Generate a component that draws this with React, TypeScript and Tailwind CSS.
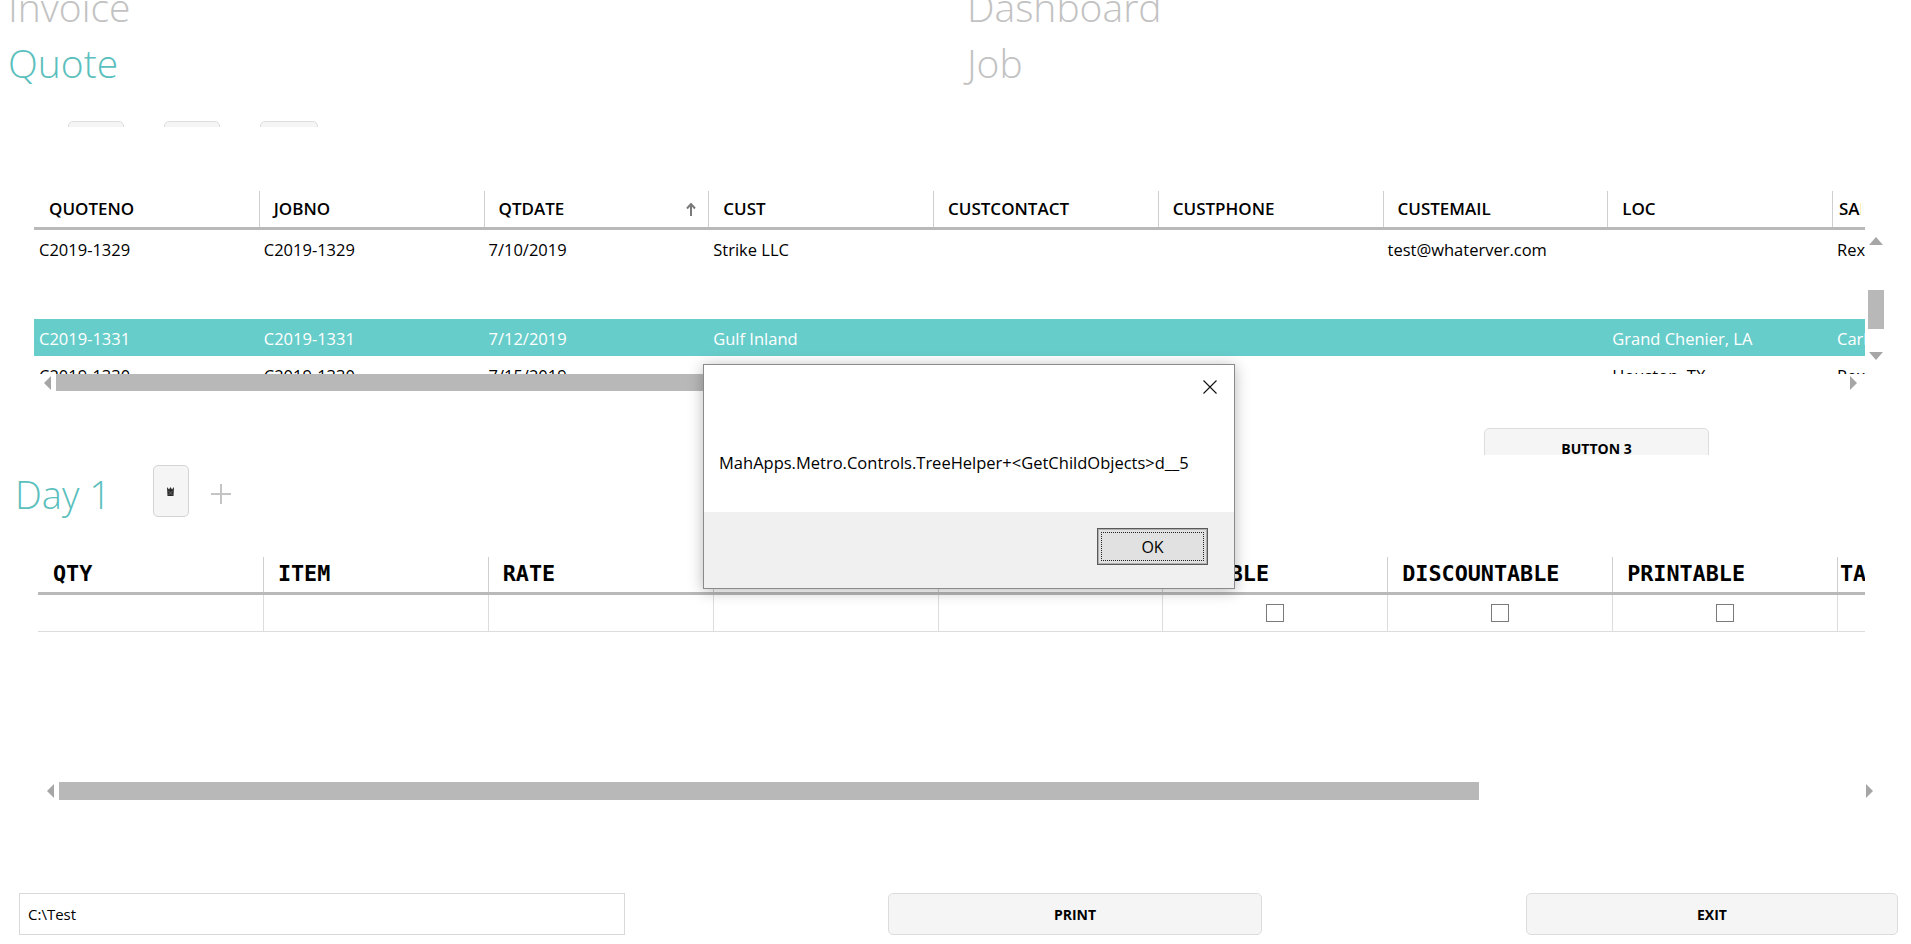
import React from 'react'

const quoteCols = ['QUOTENO', 'JOBNO', 'QTDATE', 'CUST', 'CUSTCONTACT', 'CUSTPHONE', 'CUSTEMAIL', 'LOC', 'SALESMAN']

const quoteRows = [
  { cells: ['C2019-1329', 'C2019-1329', '7/10/2019', 'Strike LLC', '', '', 'test@whaterver.com', '', 'Rex Smith'], tall: true, selected: false },
  { cells: ['C2019-1331', 'C2019-1331', '7/12/2019', 'Gulf Inland', '', '', '', 'Grand Chenier, LA', 'Carl Jones'], tall: false, selected: true },
  { cells: ['C2019-1330', 'C2019-1330', '7/15/2019', 'Bayou Marine', '', '', '', 'Houston, TX', 'Rex Smith'], tall: false, selected: false },
]

const dayCols = ['QTY', 'ITEM', 'RATE', 'DESC', 'AMOUNT', 'TAXABLE', 'DISCOUNTABLE', 'PRINTABLE', 'TAX']

function LeftArrow() {
  return (
    <svg width="7" height="14" viewBox="0 0 7 14" className="shrink-0">
      <polygon points="7,0 7,14 0,7" fill="#a6a6a6" />
    </svg>
  )
}

function RightArrow() {
  return (
    <svg width="7" height="14" viewBox="0 0 7 14" className="shrink-0">
      <polygon points="0,0 0,14 7,7" fill="#a6a6a6" />
    </svg>
  )
}

function SortArrow() {
  return (
    <svg width="10" height="13" viewBox="0 0 10 13" className="shrink-0">
      <path d="M5 1 L5 13" stroke="#7a7a7a" strokeWidth="2" />
      <path d="M1 5.5 L5 1 L9 5.5" stroke="#7a7a7a" strokeWidth="2" fill="none" />
    </svg>
  )
}

function Checkbox() {
  return <div className="w-[18px] h-[18px] border border-[#7a7a7a] bg-white" />
}

export default function App() {
  return (
    <div className="relative w-[1911px] h-[944px] overflow-hidden bg-white font-['Open_Sans',sans-serif] text-black">
      {/* nav titles */}
      <div className="flex mt-[-21px] text-[39px] leading-[56px] font-light">
        <div className="w-[967px] pl-[8px]">
          <div className="text-[#c2c2c2]">Invoice</div>
          <div className="text-[#5bbfbd]">Quote</div>
        </div>
        <div className="text-[#c2c2c2]">
          <div>Dashboard</div>
          <div>Job</div>
        </div>
      </div>

      {/* clipped tool buttons */}
      <div className="flex gap-[40px] ml-[68px] mt-[30px] h-[6px] overflow-hidden">
        <div className="w-[56px] h-[30px] rounded-[5px] border border-[#dedede] bg-[#f5f5f5]" />
        <div className="w-[56px] h-[30px] rounded-[5px] border border-[#dedede] bg-[#f5f5f5]" />
        <div className="w-[58px] h-[30px] rounded-[5px] border border-[#dedede] bg-[#f5f5f5]" />
      </div>

      {/* quotes grid */}
      <div className="ml-[34px] mt-[64px] w-[1853px]">
        <div className="w-[1831px]">
          <div className="w-[1827px] overflow-hidden">
            <div className="flex w-max h-[36px] text-[17px] font-semibold">
              {quoteCols.map((c, i) => (
                <div key={c} className={`w-[224.75px] shrink-0 flex items-center pr-[12px] ${i === quoteCols.length - 1 ? 'pl-[6px]' : 'pl-[14px]'} ${i > 0 ? 'border-l border-[#cfcfcf]' : 'border-l border-transparent'}`}>
                  <span className="flex-1">{c}</span>
                  {c === 'QTDATE' && <SortArrow />}
                </div>
              ))}
            </div>
          </div>
          <div className="h-[3px] bg-[#b9b9b9]" />
        </div>
        <div className="flex">
          <div className="w-[1831px] h-[144px] overflow-hidden text-[16.5px]">
            {quoteRows.map((r, ri) => (
              <div key={ri} className={`flex w-max ${r.tall ? 'h-[89px]' : 'h-[37px]'} ${r.selected ? 'bg-[#67cdca] text-white' : ''}`}>
                {r.cells.map((v, i) => (
                  <div key={i} className="w-[224.75px] shrink-0 pl-[5px] pt-[9px] leading-[22px] whitespace-nowrap">{v}</div>
                ))}
              </div>
            ))}
          </div>
          <div className="w-[22px] flex flex-col items-center">
            <svg width="14" height="8" viewBox="0 0 14 8" className="mt-[7px]"><polygon points="0,8 14,8 7,0" fill="#a6a6a6" /></svg>
            <div className="w-[16px] h-[39px] bg-[#b8b8b8] mt-[45px]" />
            <svg width="14" height="8" viewBox="0 0 14 8" className="mt-[23px]"><polygon points="0,0 14,0 7,8" fill="#a6a6a6" /></svg>
          </div>
        </div>
        <div className="w-[1831px] h-[17px] flex items-center">
          <div className="ml-[10px]"><LeftArrow /></div>
          <div className="ml-[5px] w-[930px] h-full bg-[#b8b8b8]" />
          <div className="flex-1" />
          <div className="mr-[8px]"><RightArrow /></div>
        </div>
      </div>

      {/* clipped BUTTON 3 */}
      <div className="mt-[37px] h-[27px] overflow-hidden">
        <div className="ml-[1484px] w-[225px] h-[40px] rounded-[5px] border border-[#dcdcdc] bg-[#f5f5f5] flex items-center justify-center text-[14px] font-bold">
          BUTTON 3
        </div>
      </div>

      {/* Day tabs */}
      <div className="flex items-center h-[52px] mt-[10px]">
        <div className="ml-[15px] text-[38px] font-light leading-none text-[#5bbfbd] mt-[6px]">Day 1</div>
        <div className="ml-[42px] w-[36px] h-[52px] rounded-[5px] border border-[#d4d4d4] bg-[#f5f5f5] flex items-center justify-center">
          <svg width="9" height="11" viewBox="0 0 9 11">
            <path d="M1 1 L3 3.5 L4.5 1 L6 3.5 L8 1 L7.5 10 L1.5 10 Z" fill="#2b2b2b" />
            <path d="M2.5 5 L6.5 9 M6.5 5 L2.5 9" stroke="#777" strokeWidth="0.8" />
          </svg>
        </div>
        <svg width="20" height="20" viewBox="0 0 20 20" className="ml-[22px] mt-[6px]">
          <path d="M10 0 V20 M0 10 H20" stroke="#c4c4c4" strokeWidth="2" />
        </svg>
      </div>

      {/* items grid */}
      <div className="ml-[38px] mt-[40px] w-[1827px] overflow-hidden">
        <div className="flex w-max h-[35px] text-[21.75px] font-bold font-['DejaVu_Sans_Mono',monospace]">
          {dayCols.map((c, i) => (
            <div key={c} className={`w-[224.875px] shrink-0 flex items-center ${i === dayCols.length - 1 ? 'pl-[2px]' : 'pl-[14px]'} ${i > 0 ? 'border-l border-[#cfcfcf]' : 'border-l border-transparent'}`}>
              {c}
            </div>
          ))}
        </div>
        <div className="h-[3px] bg-[#b9b9b9]" />
        <div className="flex w-max h-[37px] border-b border-[#dcdcdc]">
          {dayCols.map((c, i) => (
            <div key={c} className={`w-[224.875px] shrink-0 flex items-center justify-center ${i > 0 ? 'border-l border-[#dcdcdc]' : 'border-l border-transparent'}`}>
              {i >= 5 && i <= 7 && <Checkbox />}
            </div>
          ))}
        </div>
      </div>
      <div className="ml-[38px] mt-[150px] w-[1835px] h-[18px] flex items-center">
        <div className="ml-[9px]"><LeftArrow /></div>
        <div className="ml-[5px] w-[1420px] h-full bg-[#b8b8b8]" />
        <div className="flex-1" />
        <RightArrow />
      </div>

      {/* footer */}
      <div className="flex mt-[93px] h-[51px] overflow-hidden">
        <div className="ml-[19px] w-[606px] h-[42px] border border-[#d9d9d9] flex items-center pl-[8px] text-[15px] shrink-0">C:\Test</div>
        <div className="ml-[263px] w-[374px] h-[42px] rounded-[5px] border border-[#dcdcdc] bg-[#f5f5f5] flex items-center justify-center text-[14px] font-bold shrink-0">PRINT</div>
        <div className="ml-[264px] w-[372px] h-[42px] rounded-[5px] border border-[#dcdcdc] bg-[#f5f5f5] flex items-center justify-center text-[14px] font-bold shrink-0">EXIT</div>
      </div>

      {/* message box */}
      <div className="absolute left-[703px] top-[364px] w-[532px] h-[225px] border border-[#8a8a8a] bg-white shadow-[0_2px_14px_rgba(0,0,0,0.28)] flex flex-col">
        <div className="h-[147px] flex flex-col">
          <div className="flex justify-end pr-[17px] pt-[15px]">
            <svg width="14" height="14" viewBox="0 0 14 14">
              <path d="M0.5 0.5 L13.5 13.5 M13.5 0.5 L0.5 13.5" stroke="#111" strokeWidth="1.1" />
            </svg>
          </div>
          <div className="pl-[15px] mt-[59px] text-[16.5px] leading-[20px] whitespace-nowrap">MahApps.Metro.Controls.TreeHelper+&lt;GetChildObjects&gt;d__5</div>
        </div>
        <div className="flex-1 bg-[#f0f0f0] flex justify-end items-start pt-[16px] pr-[26px]">
          <div className="w-[111px] h-[37px] border border-[#5a5a5a] bg-[#e1e1e1] p-[3px] shadow-[inset_0_0_0_1px_#b0b0b0]">
            <div className="w-full h-full border border-dotted border-[#222] flex items-center justify-center text-[16px]">OK</div>
          </div>
        </div>
      </div>
    </div>
  )
}
